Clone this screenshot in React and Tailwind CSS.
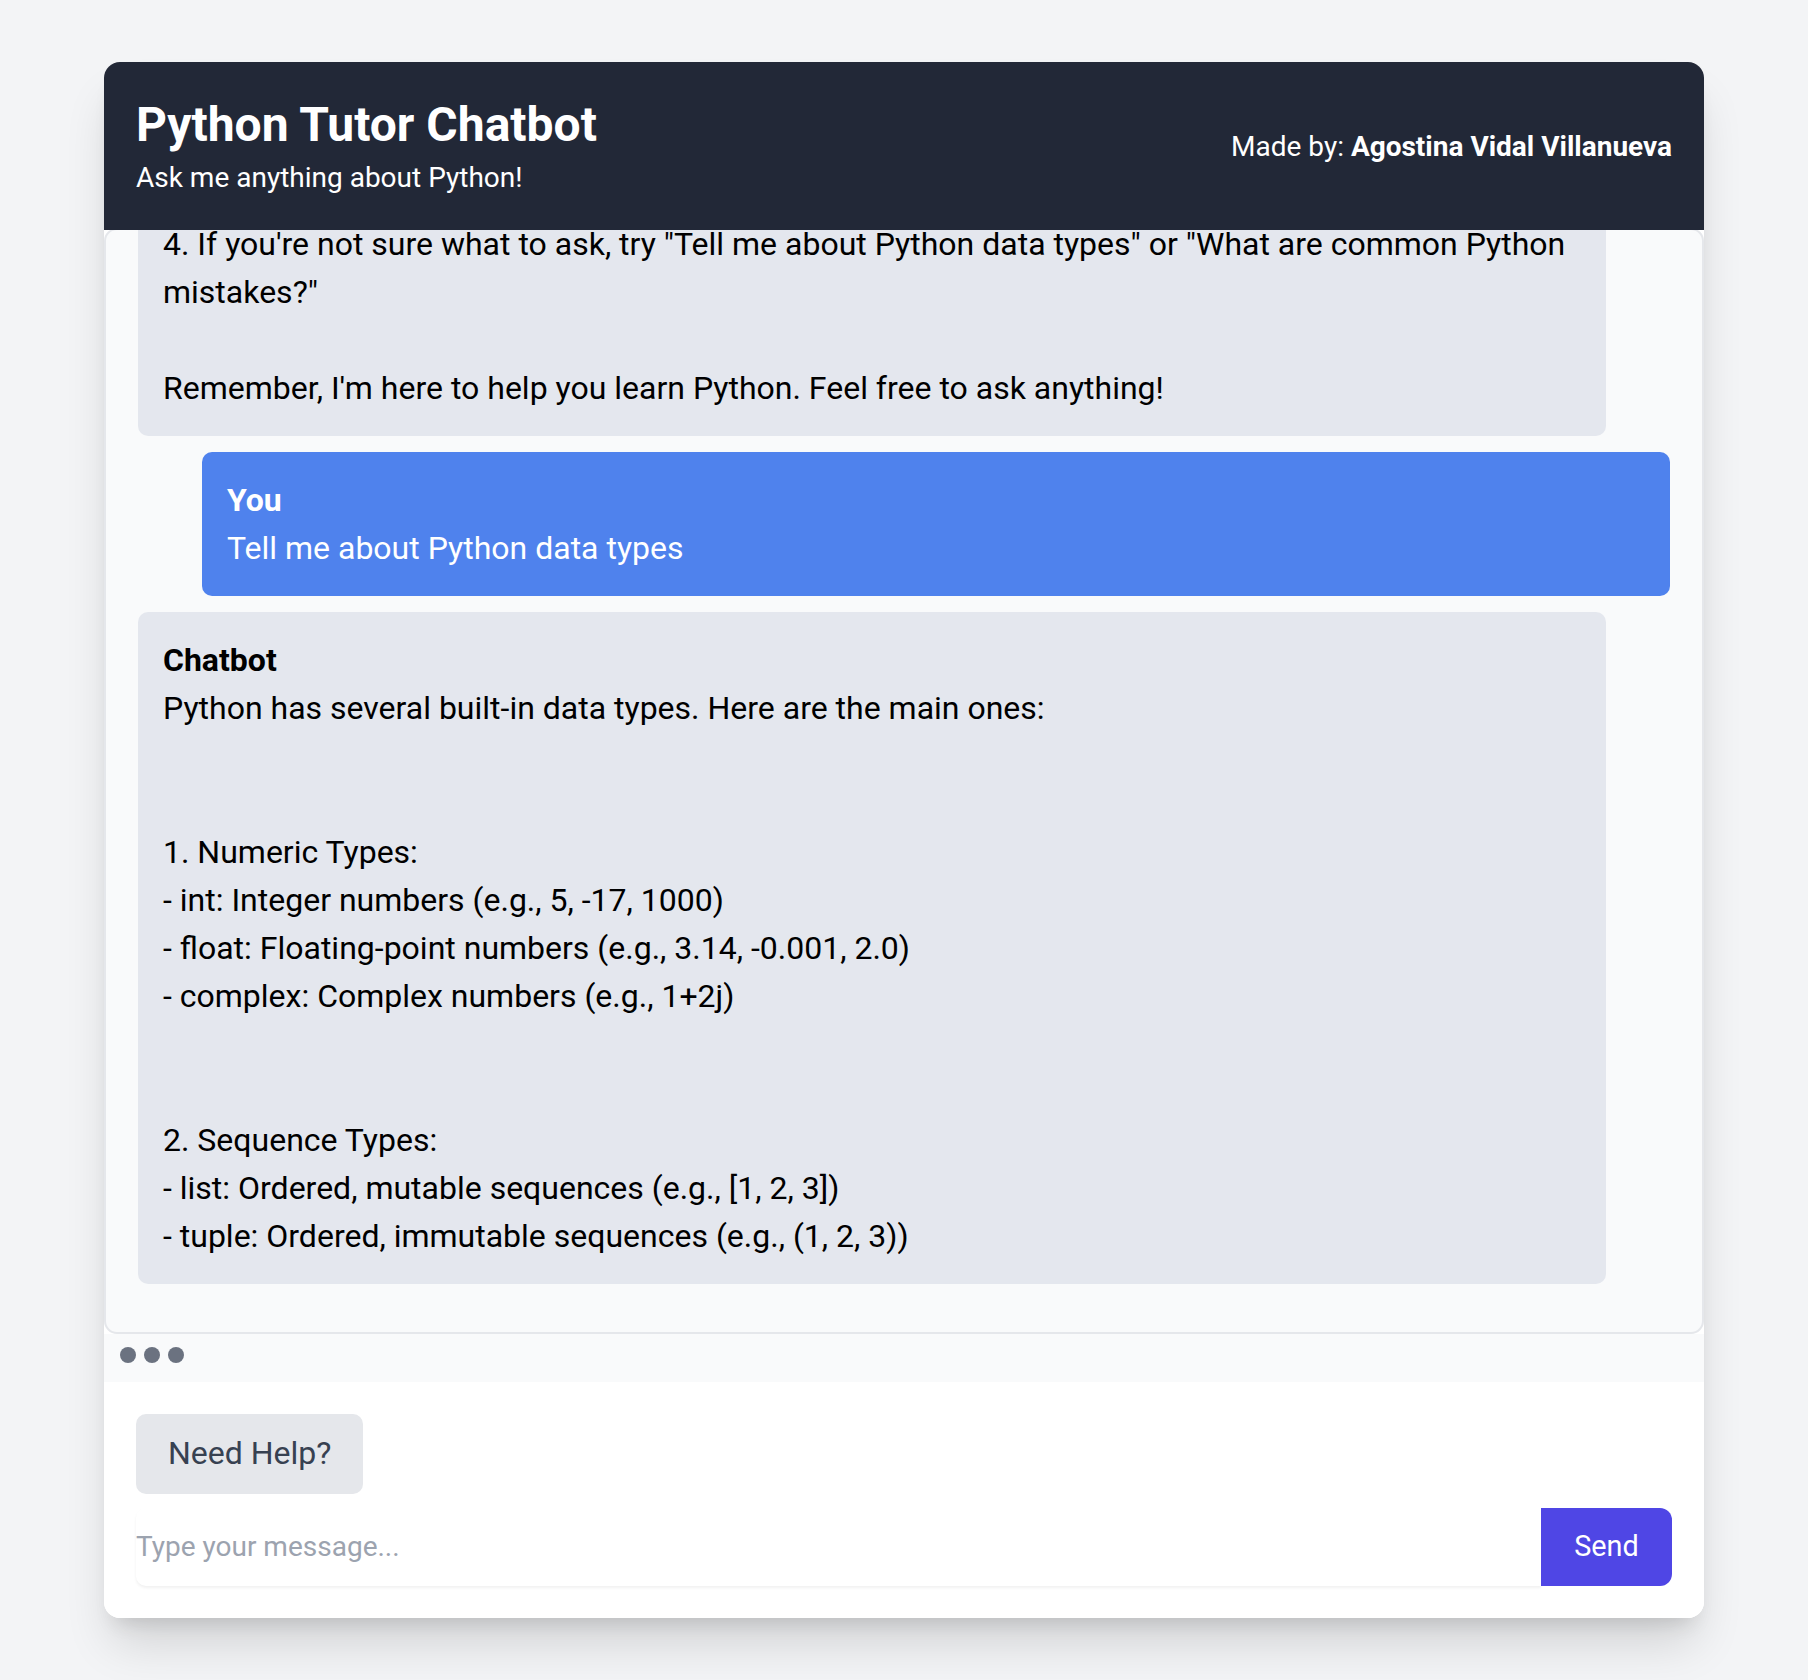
import React from "react";

const firstMsg = `Hello! I'm your Python Tutor Chatbot. Here's how to use me:

1. Ask any question about Python programming, from basics to advanced topics.
2. Request code examples or explanations of specific concepts.
3. Click "Need Help?" if you get stuck or want suggestions.
4. If you're not sure what to ask, try "Tell me about Python data types" or "What are common Python mistakes?"

Remember, I'm here to help you learn Python. Feel free to ask anything!`;

const answer = `Python has several built-in data types. Here are the main ones:


1. Numeric Types:
- int: Integer numbers (e.g., 5, -17, 1000)
- float: Floating-point numbers (e.g., 3.14, -0.001, 2.0)
- complex: Complex numbers (e.g., 1+2j)


2. Sequence Types:
- list: Ordered, mutable sequences (e.g., [1, 2, 3])
- tuple: Ordered, immutable sequences (e.g., (1, 2, 3))`;

function BotMsg({ text }) {
  return (
    <div className="mr-[64px] mb-[16px] rounded-[10px] bg-[#e4e7ee] px-[25px] py-[24px] text-black">
      <div className="font-bold text-[32px] leading-[48px]">Chatbot</div>
      <div className="whitespace-pre-wrap text-[32px] leading-[48px]">{text}</div>
    </div>
  );
}

function UserMsg({ text }) {
  return (
    <div className="ml-[64px] mb-[16px] rounded-[10px] bg-[#4f82ed] px-[25px] py-[24px] text-white">
      <div className="font-bold text-[32px] leading-[48px]">You</div>
      <div className="whitespace-pre-wrap text-[32px] leading-[48px]">{text}</div>
    </div>
  );
}

export default function App() {
  return (
    <div
      className="min-h-screen bg-[#f3f4f6] px-[104px] py-[62px]"
      style={{ fontFamily: "Roboto, 'Liberation Sans', sans-serif" }}
    >
      <div className="flex flex-col overflow-hidden rounded-[16px] bg-white shadow-[0_32px_48px_-8px_rgba(0,0,0,0.14),0_14px_20px_-10px_rgba(0,0,0,0.12)]">
        {/* Header */}
        <div className="relative z-10 flex items-center justify-between bg-[#222837] px-[32px] pb-[31px] pt-[34px] text-white">
          <div className="flex flex-col">
            <h1 className="text-[48px] font-bold leading-[57.6px]">Python Tutor Chatbot</h1>
            <p className="mt-[3px] text-[28px] leading-[42px]">Ask me anything about Python!</p>
          </div>
          <div className="text-[28px] leading-[42px]">
            Made by: <span className="font-bold">Agostina Vidal Villanueva</span>
          </div>
        </div>

        {/* Chat area */}
        <div className="-mt-[2px] flex h-[1106px] flex-col justify-end overflow-hidden rounded-[13px] border-2 border-[#e5e7eb] bg-[#f9fafb] px-[32px] pb-[32px] pt-[32px]">
          <BotMsg text={firstMsg} />
          <UserMsg text="Tell me about Python data types" />
          <BotMsg text={answer} />
        </div>

        {/* Typing indicator */}
        <div className="flex h-[48px] gap-[8px] bg-[#f9fafb] px-[16px] pt-[13px]">
          <span className="h-[16px] w-[16px] rounded-full bg-[#6b7280]" />
          <span className="h-[16px] w-[16px] rounded-full bg-[#6b7280]" />
          <span className="h-[16px] w-[16px] rounded-full bg-[#6b7280]" />
        </div>

        {/* Input area */}
        <div className="flex flex-col bg-white px-[32px] pb-[32px] pt-[32px]">
          <div>
            <button className="h-[80px] rounded-[10px] bg-[#e5e7eb] px-[32px] text-[32px] leading-[44.8px] text-[#374151]">
              Need Help?
            </button>
          </div>
          <div className="mt-[14px] flex h-[78px] items-stretch">
            <input
              type="text"
              placeholder="Type your message..."
              className="min-w-0 flex-1 rounded-l-[10px] bg-white px-0 text-[28px] text-[#111827] shadow-[0_2px_3px_rgba(0,0,0,0.06)] outline-none placeholder:text-[#9ca3af]"
            />
            <button className="w-[131px] rounded-r-[12px] bg-[#4f46e5] text-[28.8px] text-white">
              Send
            </button>
          </div>
        </div>
      </div>
    </div>
  );
}
